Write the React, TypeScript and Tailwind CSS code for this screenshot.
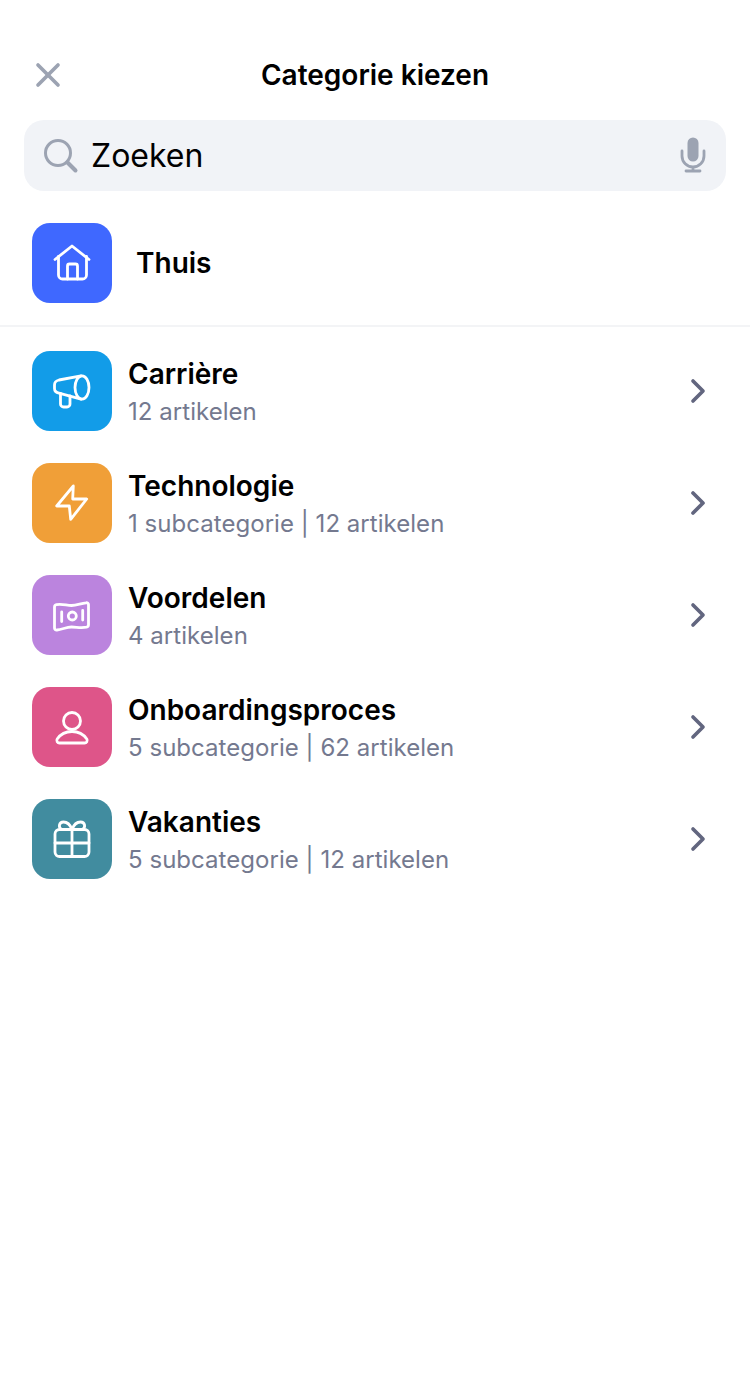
import { ChevronRight, X } from "lucide-react";
import type { ReactNode } from "react";

const Icon = ({ children }: { children: ReactNode }) => (
  <svg
    width="40"
    height="40"
    viewBox="0 0 40 40"
    fill="none"
    stroke="white"
    strokeWidth="2.8"
    strokeLinecap="round"
    strokeLinejoin="round"
  >
    {children}
  </svg>
);

const HomeIcon = () => (
  <Icon>
    <path d="M3 16.500 20 3l17 13.500" />
    <path d="M6.500 13.500V32a4 4 0 0 0 4 4h20a4 4 0 0 0 4-4V13.500" />
    <path d="M15.500 36V23a2 2 0 0 1 2-2h6a2 2 0 0 1 2 2v13" />
  </Icon>
);

const MegaphoneIcon = () => (
  <Icon>
    <path d="M29 4.800 7 9C4 9.700 2.500 11.500 2.500 14v3.500c0 2.500 1.500 4 4.500 4.700L29 28.200" />
    <ellipse cx="30" cy="16.500" rx="7" ry="11.700" />
    <path d="M8.500 22.500V33a3 3 0 0 0 3 3h3.500a3 3 0 0 0 3-3v-8" />
  </Icon>
);

const BoltIcon = () => (
  <Icon>
    <path d="M21.300 3 4.700 23h12.600l1.400 13.300 16-20.300h-14z" />
  </Icon>
);

const MoneyIcon = () => (
  <Icon>
    <path d="M2.500 12a2.500 2.500 0 0 1 2-2.400c6-1 10 .9 15 .9s9-2 14.500-2.700a2 2 0 0 1 2.500 2v20a2.500 2.500 0 0 1-2 2.400c-6 1-10-.2-15-.2s-9 2.300-14.500 3a2 2 0 0 1-2.500-2z" />
    <path d="M9.700 17v9.500M30.700 15.500V25" />
    <circle cx="20.300" cy="21" r="4" />
  </Icon>
);

const PersonIcon = () => (
  <Icon>
    <circle cx="20" cy="14" r="8.500" />
    <path d="M20 24.500c-6.500 0-12 3.500-14.800 7.500-1.200 2 .3 4 2.300 4h25c2 0 3.500-2 2.300-4-2.800-4-8.300-7.500-14.800-7.500z" />
  </Icon>
);

const GiftIcon = () => (
  <Icon>
    <rect x="3" y="10.500" width="34" height="27" rx="4.500" />
    <path d="M3 24h34M20 10.500v27" />
    <path d="M20 10.500c-1.500-4-4.500-7.500-8.500-7.500-4.500 0-5.500 5-2 7.500" />
    <path d="M20 10.500c1.500-4 4.500-7.500 8.500-7.500 4.500 0 5.500 5 2 7.500" />
  </Icon>
);

const categories = [
  { name: "Carrière", meta: "12 artikelen", color: "bg-[#129ce8]", icon: <MegaphoneIcon /> },
  { name: "Technologie", meta: "1 subcategorie | 12 artikelen", color: "bg-[#f09f38]", icon: <BoltIcon /> },
  { name: "Voordelen", meta: "4 artikelen", color: "bg-[#bb84de]", icon: <MoneyIcon /> },
  { name: "Onboardingsproces", meta: "5 subcategorie | 62 artikelen", color: "bg-[#de5589]", icon: <PersonIcon /> },
  { name: "Vakanties", meta: "5 subcategorie | 12 artikelen", color: "bg-[#418c9f]", icon: <GiftIcon /> },
];

const App = () => {
  return (
    <div className="h-[1394px] w-[750px] bg-white font-['Inter',sans-serif] text-black">
      <header className="relative flex h-[120px] items-center justify-center pt-[30px]">
        <X className="absolute left-[28px] top-[55px] text-[#9ca3b2]" size={40} strokeWidth={2.2} />
        <h1 className="text-[28px] leading-[34px] font-semibold">Categorie kiezen</h1>
      </header>

      <div className="mx-6 flex h-[71px] items-center rounded-[20px] bg-[#f1f3f7] pr-[18px] pl-[19px]">
        <svg width="36" height="36" viewBox="0 0 36 36" fill="none" stroke="#9ca3b2" strokeWidth="3" strokeLinecap="round">
          <circle cx="15" cy="15" r="12.500" />
          <path d="m24.500 24.500 8 8" strokeWidth="4" />
        </svg>
        <span className="ml-[12px] flex-1 text-[32px] leading-[40px]">Zoeken</span>
        <svg width="30" height="38" viewBox="0 0 30 38" fill="none" stroke="#9ca3b2" strokeWidth="2.800" strokeLinecap="round">
          <rect x="9.500" y="0.500" width="11" height="24" rx="5.500" fill="#9ca3b2" stroke="none" />
          <path d="M4 14v5a11 11 0 0 0 22 0v-5M15 30v4M8 34h14" />
        </svg>
      </div>

      <div className="mt-8 flex h-[104px] border-b-2 border-[#f3f4f6] pl-8">
        <div className="flex h-20 w-20 items-center justify-center rounded-[18px] bg-[#3f68ff]">
          <HomeIcon />
        </div>
        <span className="mt-[23px] ml-[24px] text-[28px] leading-[35px] font-semibold">Thuis</span>
      </div>

      <ul className="mt-6 flex flex-col gap-8 pr-8 pl-8">
        {categories.map((category) => (
          <li key={category.name} className="flex h-20 items-center">
            <div className={`flex h-20 w-20 shrink-0 items-center justify-center rounded-[18px] ${category.color}`}>
              {category.icon}
            </div>
            <div className="ml-4 flex-1">
              <div className="text-[28px] leading-[34px] font-semibold">{category.name}</div>
              <div className="mt-[6px] text-[24px] leading-[29px] tracking-[0.04px] text-[#74798f]">{category.meta}</div>
            </div>
            <ChevronRight className="text-[#62667f]" size={40} strokeWidth={2.2} />
          </li>
        ))}
      </ul>
    </div>
  );
};

export default App;
